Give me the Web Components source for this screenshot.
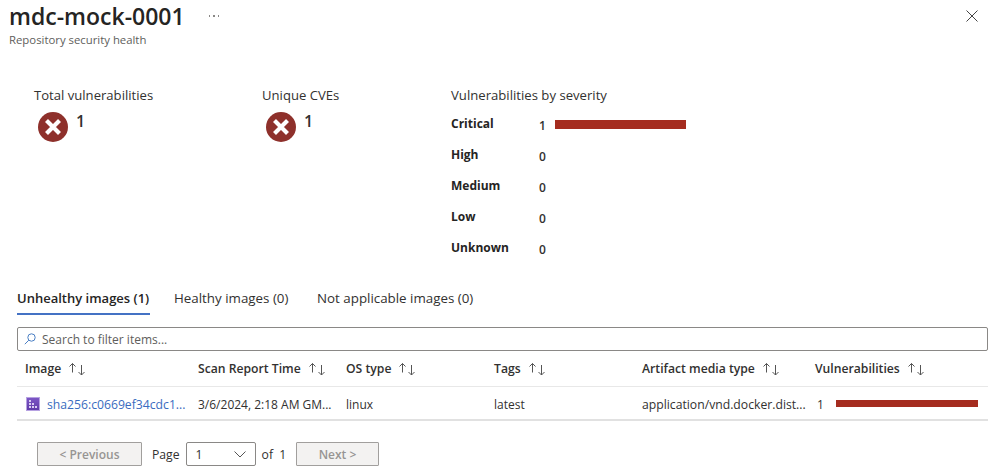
<!DOCTYPE html>
<html lang="en">
<head>
<meta charset="utf-8">
<title>mdc-mock-0001</title>
<style>
  html, body { margin: 0; background: #fff; }
  body { font-family: "Open Sans", "Liberation Sans", sans-serif; font-size: 12px; color: #323130; width: 998px; height: 471px; overflow: hidden; }
</style>
</head>
<body>
<blade-header title-text="mdc-mock-0001">Repository security health</blade-header>
<summary-band>
  <stat-tile label="Total vulnerabilities" value="1" style="width:228px"></stat-tile>
  <stat-tile label="Unique CVEs" value="1" style="width:189px"></stat-tile>
  <severity-chart></severity-chart>
</summary-band>
<tab-strip></tab-strip>
<filter-box></filter-box>
<image-table></image-table>
<pager-bar></pager-bar>

<script>
const errorIcon = `<svg width="30" height="30" viewBox="0 0 30 30"><circle cx="15" cy="15" r="15" fill="#8e302b"/><path d="M8.5 8.5l13 13M21.5 8.5l-13 13" stroke="#fff" stroke-width="4.2" fill="none"/></svg>`;
const sortIcon = `<svg width="17" height="14" viewBox="0 0 17 14"><path d="M3.5 10.5V1.5M.5 4.5l3-3 3 3M12.5 3v10M9.5 10l3 3 3-3" stroke="#555" stroke-width="1" fill="none"/></svg>`;

class BladeHeader extends HTMLElement {
  connectedCallback() {
    this.attachShadow({ mode: 'open' }).innerHTML = `
    <style>
      :host { display: block; height: 87px; padding-left: 9px; box-sizing: border-box; position: relative; }
      .top { display: flex; align-items: center; height: 33px; }
      h1 { margin: 0; font-size: 23px; font-weight: 600; color: #252423; line-height: 33px; }
      .more { margin-left: 24px; margin-top: -2px; display: flex; gap: 3px; }
      .more i { width: 1.5px; height: 2px; background: #8a8886; }
      .sub { font-size: 11.35px; color: #605e5c; line-height: 14px; }
      .close { position: absolute; left: 966px; top: 10px; }
    </style>
    <div class="top"><h1>${this.getAttribute('title-text')}</h1><div class="more"><i></i><i></i><i></i></div></div>
    <div class="sub"><slot></slot></div>
    <svg class="close" width="12" height="12" viewBox="0 0 12 12"><path d="M.5.5l11 11M11.5.5l-11 11" stroke="#444" stroke-width="1" fill="none"/></svg>`;
  }
}

class SummaryBand extends HTMLElement {
  connectedCallback() {
    this.attachShadow({ mode: 'open' }).innerHTML = `
    <style>:host { display: flex; height: 198px; padding-left: 34px; box-sizing: border-box; }</style>
    <slot></slot>`;
  }
}

class StatTile extends HTMLElement {
  connectedCallback() {
    this.attachShadow({ mode: 'open' }).innerHTML = `
    <style>
      :host { display: block; }
      .label { font-size: 13.1px; line-height: 16px; color: #323130; }
      .body { display: flex; margin: 9px 0 0 4px; }
      .val { font-size: 16px; font-weight: 600; margin-left: 8px; line-height: 18px; color: #323130; }
      svg { display: block; }
    </style>
    <div class="label">${this.getAttribute('label')}</div>
    <div class="body">${errorIcon}<div class="val">${this.getAttribute('value')}</div></div>`;
  }
}

class SeverityChart extends HTMLElement {
  connectedCallback() {
    const rows = [['Critical', 1], ['High', 0], ['Medium', 0], ['Low', 0], ['Unknown', 0]];
    this.attachShadow({ mode: 'open' }).innerHTML = `
    <style>
      :host { display: block; }
      .label { font-size: 13.15px; line-height: 16px; color: #323130; margin-bottom: 13px; }
      .row { display: grid; grid-template-columns: 88px 16px 131px; height: 31px; align-items: start; }
      b { font-size: 12px; font-weight: 700; line-height: 16px; color: #252423; }
      span { font-size: 12px; font-weight: 600; line-height: 16px; margin-top: 2px; color: #323130; }
      i { display: block; height: 9px; background: #a52c1f; margin-top: 4px; }
    </style>
    <div class="label">Vulnerabilities by severity</div>
    ${rows.map(([n, v]) => `<div class="row"><b>${n}</b><span>${v}</span>${v ? '<i></i>' : ''}</div>`).join('')}`;
  }
}

class TabStrip extends HTMLElement {
  connectedCallback() {
    this.attachShadow({ mode: 'open' }).innerHTML = `
    <style>
      :host { display: flex; height: 42px; padding-left: 17px; box-sizing: border-box; }
      .tab { height: 30px; padding-top: 5px; box-sizing: border-box; line-height: 17px; font-size: 13.35px; color: #323130; white-space: nowrap; }
      .on { font-weight: 600; font-size: 13px; border-bottom: 2px solid #4472c4; color: #252423; width: 133px; margin-right: 24px; }
      .t2 { width: 143px; }
    </style>
    <div class="tab on">Unhealthy images (1)</div>
    <div class="tab t2">Healthy images (0)</div>
    <div class="tab">Not applicable images (0)</div>`;
  }
}

class FilterBox extends HTMLElement {
  connectedCallback() {
    this.attachShadow({ mode: 'open' }).innerHTML = `
    <style>
      :host { display: flex; align-items: center; gap: 6px; margin-left: 17px; width: 971px; height: 24px; box-sizing: border-box; border: 1px solid #8a8886; border-radius: 2px; padding-left: 6px; font-size: 12px; color: #605e5c; }
      svg { display: block; flex: none; }
    </style>
    <svg width="12" height="12" viewBox="0 0 12 12"><circle cx="7.5" cy="4.5" r="3.7" stroke="#4a7fc4" fill="none"/><path d="M4.8 7.2L.8 11.2" stroke="#4a7fc4" fill="none"/></svg>
    <span>Search to filter items...</span>`;
  }
}

class ImageTable extends HTMLElement {
  connectedCallback() {
    const cols = ['Image', 'Scan Report Time', 'OS type', 'Tags', 'Artifact media type', 'Vulnerabilities'];
    this.attachShadow({ mode: 'open' }).innerHTML = `
    <style>
      :host { display: block; margin-left: 17px; width: 971px; }
      .grid { display: grid; grid-template-columns: 173px 148px 148px 148px 173px 181px; }
      .head { height: 36px; border-bottom: 1px solid #e8e8e8; box-sizing: border-box; }
      .row { height: 34px; border-bottom: 2px solid #e1e1e1; box-sizing: border-box; }
      .cell { display: flex; align-items: center; padding-left: 8px; white-space: nowrap; min-width: 0; }
      .head .cell { font-weight: 600; color: #323130; gap: 8px; font-size: 12.2px; }
      .row .cell { color: #323130; font-size: 12px; padding-top: 2px; }
      .row .wide { font-size: 12.2px; }
      a { color: #3a6cc0; text-decoration: none; margin-left: 7px; }
      svg { display: block; flex: none; }
      .bar { width: 142px; height: 7px; background: #a52c1f; margin-left: 12px; margin-top: -2px; }
      .row .v { padding-left: 10px; }
    </style>
    <div class="grid head">${cols.map(c => `<div class="cell"><span>${c}</span>${sortIcon}</div>`).join('')}</div>
    <div class="grid row">
      <div class="cell wide" style="padding-left:9px"><svg width="14" height="14" viewBox="0 0 14 14"><defs><linearGradient id="p" x1="0" y1="0" x2="0" y2="1"><stop offset="0" stop-color="#7d57c6"/><stop offset="1" stop-color="#5f3aa8"/></linearGradient></defs><rect x="0.5" y="0.5" width="13" height="13" fill="url(#p)" stroke="#b7a2e2"/><path d="M3 3h2v2H3zM3 6h2v2H3zM3 9h2v2H3zM6 6h2v2H6zM6 9h2v2H6zM9 9h2v2H9z" fill="#d9ccf2"/></svg><a>sha256:c0669ef34cdc1...</a></div>
      <div class="cell">3/6/2024, 2:18 AM GM...</div>
      <div class="cell">linux</div>
      <div class="cell">latest</div>
      <div class="cell wide">application/vnd.docker.dist...</div>
      <div class="cell v">1<div class="bar"></div></div>
    </div>`;
  }
}

class PagerBar extends HTMLElement {
  connectedCallback() {
    this.attachShadow({ mode: 'open' }).innerHTML = `
    <style>
      :host { display: flex; align-items: center; height: 24px; margin: 21px 0 0 37px; font-size: 12.2px; color: #323130; }
      button { height: 24px; box-sizing: border-box; background: #f3f2f1; border: 1px solid #a19f9d; border-radius: 1px; color: #979593; font: 600 12px "Open Sans", sans-serif; padding: 0; }
      .prev { width: 105px; margin-right: 10px; }
      .next { width: 83px; margin-left: auto; }
      .sel { width: 70px; height: 24px; box-sizing: border-box; border: 1px solid #8a8886; border-radius: 2px; margin: 0 6px; display: flex; align-items: center; justify-content: space-between; padding: 0 9px; }
      .of { width: 34px; }
      svg { display: block; }
      .wrap { display: flex; align-items: center; width: 342px; }
    </style>
    <div class="wrap">
      <button class="prev">&lt; Previous</button>
      <span>Page</span>
      <div class="sel"><span>1</span><svg width="12" height="7" viewBox="0 0 12 7"><path d="M.5.5L6 6 11.5.5" stroke="#555" fill="none"/></svg></div>
      <span class="of">of&nbsp; 1</span>
      <button class="next">Next &gt;</button>
    </div>`;
  }
}

customElements.define('blade-header', BladeHeader);
customElements.define('summary-band', SummaryBand);
customElements.define('stat-tile', StatTile);
customElements.define('severity-chart', SeverityChart);
customElements.define('tab-strip', TabStrip);
customElements.define('filter-box', FilterBox);
customElements.define('image-table', ImageTable);
customElements.define('pager-bar', PagerBar);
</script>
</body>
</html>
